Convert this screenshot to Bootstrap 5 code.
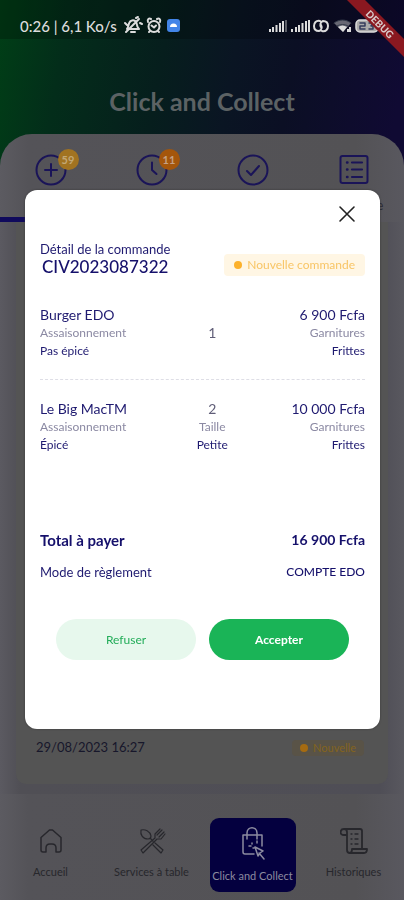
<!DOCTYPE html>
<html lang="fr">
<head>
<meta charset="utf-8">
<meta name="viewport" content="width=device-width, initial-scale=1">
<title>Click and Collect</title>
<link href="https://cdn.jsdelivr.net/npm/bootstrap@5.3.0/dist/css/bootstrap.min.css" rel="stylesheet">
<style>
:root { --navy: #1f1a70; --dim-navy: #1a1458; --ink: #17172b; }
body { font-family: Lato, "Open Sans", sans-serif; background: #545358; color: var(--navy); font-size: 13px; line-height: 18px; }
svg { display: block; flex: none; fill: none; stroke: currentColor; stroke-linecap: round; stroke-linejoin: round; }
.app { background: linear-gradient(100deg, #003f16 0, #032d1a 70px, #061e1d 170px, #0a1523 240px, #0b0f24 300px, #100a33 410px) top / 100% 190px no-repeat; }
.statusbar { height: 39px; padding: 13px 23px 0 20px; background: rgba(0,0,0,.22); color: #dcdcdc; font-size: 15px; line-height: 26px; font-weight: 500; }
.statusbar svg { height: 26px; }
.status-text { width: 103px; white-space: nowrap; }
.ribbon { position: absolute; top: 0; right: 0; z-index: 1060; }
.app-title { font-size: 25px; line-height: 30px; font-weight: 700; color: #5c6264; padding: 47px 0 18px; margin: 0; }
.sheet { background: linear-gradient(90deg, #5c5b61 0, #545358 28px, #535255 88%, #59585f 100%); border-radius: 32px 32px 0 0; }
.tabs { padding-top: 20px; height: 88px; }
.tab-btn { color: var(--dim-navy); background: none; border: 0; padding: 0; line-height: 18px; font-size: 13px; gap: 10px; border-bottom: 5px solid transparent; }
.tab-btn.active { border-color: #100a5c; }
.tab-label { color: #2b2a33; }
.tab-icon { width: 32px; }
.counter { position: absolute; left: 23px; top: -5px; width: 21px; height: 21px; border-radius: 50%; background: #a17321; color: #c3a876; font-size: 11px; line-height: 21px; font-weight: 700; }
.counter-late { background: #a4560b; color: #c5a083; }
.orders { padding: 0 16px 10px; background: linear-gradient(90deg, #5b5a61, #504f55 20px, #4f4e56 94%, #59585f); }
.order-row { background: #545454; border-radius: 0 0 10px 10px; padding: 0 24px 28px 20px; color: var(--ink); font-size: 13px; }
.tag-dim { background: #595347; color: #84641e; border-radius: 4px; font-size: 11px; line-height: 16px; padding: 0 8px; gap: 5px; }
.tag-new { background: #fff6e4; color: #f8c566; border-radius: 4px; font-size: 12px; line-height: 22px; padding: 0 10px; gap: 5px; }
.dot { width: 8px; height: 8px; border-radius: 50%; background: #fcb12c; }
.tag-dim .dot { background: #a66b10; }
.bottom-bar { padding: 23px 0 8px; }
.nav-item-link { color: #27272c; text-decoration: none; font-size: 11px; line-height: 16px; padding: 11px 0 12px; gap: 10px; white-space: nowrap; }
.nav-item-link.active { background: #04003f; color: #8c8ba0; border-radius: 9px; width: 86px; padding: 7px 0 8px; gap: 6px; margin: 0 auto; }
.order-modal .modal-dialog { margin: 190px 24px 24px 25px; max-width: none; }
.order-modal .modal-content { border: 0; border-radius: 12px; padding: 14px 15px 69px; color: var(--navy); box-shadow: 0 0 2px #333; }
.close-x { background: none; border: 0; padding: 0; margin-right: 8px; color: #222; }
.order-no { font-size: 17px; line-height: 18px; font-weight: 500; color: #100a70; margin: 0 2px; }
.line-item { display: grid; grid-template-columns: 38% 30% 32%; font-size: 12px; }
.line-item + .line-item { border-top: 1px dashed #dedee6; padding-top: 20px; margin-top: 19px; }
.item-main { font-size: 14px; }
.item-sub { color: #8b89a3; }
.items { margin-top: 30px; }
.qty { color: #605e78; font-size: 14px; }
.totals { margin-top: 76px; line-height: 20px; }
.total-line { font-size: 15px; font-weight: 700; margin-bottom: 12px; }
.total-sum { font-size: 14px; }
.pay-mode { font-size: 12px; font-weight: 500; }
.total-line, .pay-mode, .order-no { color: #15106b; }
.actions { margin: 37px 16px 0; gap: 13px; }
.actions .btn { border: 0; line-height: 17px; padding: 12px; font-size: 12px; }
.btn-refuse { background: #e7f8ed; color: #24ad5a; }
.btn-accept { background: #1ab457; color: #fff; font-weight: 700; }
</style>
<script src="https://cdn.jsdelivr.net/npm/bootstrap@5.3.0/dist/js/bootstrap.bundle.min.js"></script>
</head>
<body>
<div class="app d-flex flex-column min-vh-100">
  <div class="statusbar d-flex justify-content-between">
    <div class="d-flex">
      <span class="status-text">0:26 | 6,1 Ko/s</span>
      <svg width="58" viewBox="0 0 58 26" stroke-width="2">
        <path d="M4 16c2-2 1-7 4-8 3-2 6 1 6 4 0 2 1 3 2 4zM8 19h4M16 6 3 19M2 10l2 2M17 10l2 1M13 5l2-1"/>
        <circle cx="31" cy="13.500" r="5.500"/><path d="m28.500 12.500 2.500 2 2-2M25 9c-1-3 1-4 3-3M37 9c1-3-1-4-3-3M27 18l-1 1M35 18l1 1"/>
        <rect x="44" y="6" width="13" height="13" rx="3" fill="#4385e8" stroke="none"/><path d="M47 14a3.500 3.500 0 0 1 7 0z" fill="#fff" stroke="none"/>
      </svg>
    </div>
    <svg width="112" viewBox="0 0 112 26">
      <g stroke="none" fill="currentColor"><path d="M0 16h2v3H0zM3 14h2v5H3zM6.500 12h2v7h-2zM10 10h2v9h-2zM13 8h2v11h-2z"/><path opacity=".4" d="M16 7h2v12h-2z"/><path d="M22 16h2v3h-2zM26 14h2v5h-2zM29 12h2v7h-2zM32.500 10h2v9h-2zM36 8h2v11h-2zM39 7h2v12h-2z"/></g>
      <path stroke-width="2" d="M51 8c-4-1-6 2-6 5s2 5 5 5c3-1 3-4 2-6M53 18c4 1 6-2 6-5s-2-5-5-5c-3 1-3 4-2 6"/>
      <g stroke="none" fill="currentColor"><path opacity=".45" d="M65 10c5-4 12-4 17 0l-8 9z"/><path d="M69 14c3-2 6-2 9 0l-4 5z"/><path d="M78 19v-3h2v-2h2v5z"/></g>
      <path d="M65 10c5-4 12-4 17 0M68 13c3-2 8-2 11 0" stroke="#333b4a" stroke-width="1"/>
      <rect x="87" y="7" width="22" height="12" rx="4" fill="#aaa" stroke-width="1.500"/><path d="M111 12v3" stroke-width="1.500"/>
      <path d="M91 10h5v3h-5v3h5M100 10h4l-2 3h2v3h-4" stroke="#333b5c" stroke-width="1.500"/>
    </svg>
  </div>
  <h1 class="app-title text-center">Click and Collect</h1>

  <main class="sheet flex-grow-1 d-flex flex-column">
    <div class="tabs row row-cols-4 g-0">
      <button type="button" class="tab-btn active col d-flex flex-column align-items-center" aria-label="Nouvelles">
        <span class="tab-icon position-relative"><svg width="32" height="32" viewBox="0 0 32 32" stroke-width="2"><circle cx="16" cy="16" r="14.500"/><path d="M16 10v12M10 16h12"/></svg><span class="counter">59</span></span>
      </button>
      <button type="button" class="tab-btn col d-flex flex-column align-items-center" aria-label="En cours">
        <span class="tab-icon position-relative"><svg width="32" height="32" viewBox="0 0 32 32" stroke-width="2"><circle cx="16" cy="16" r="14.500"/><path d="M16 8.500V16l4.500 4"/></svg><span class="counter counter-late">11</span></span>
      </button>
      <button type="button" class="tab-btn col d-flex flex-column align-items-center" aria-label="Prêtes">
        <svg width="32" height="32" viewBox="0 0 32 32" stroke-width="2"><circle cx="16" cy="16" r="14.500"/><path d="m10 17 4 4 8-9"/></svg>
      </button>
      <button type="button" class="tab-btn col d-flex flex-column align-items-center">
        <svg width="32" height="32" viewBox="0 0 32 32" stroke-width="2"><rect x="2.500" y="2" width="27" height="27" rx="2"/><path d="M14 8.500h10M14 15.500h10M14 23h10" stroke-width="2.200"/><path d="M9 8.500h.5M9 15.500h.5M9 23h.5" stroke-width="2.400"/></svg>
        <span class="tab-label">Historique</span>
      </button>
    </div>
    <div class="orders flex-grow-1 d-flex flex-column">
      <div class="order-row flex-grow-1 d-flex align-items-end justify-content-between">
        <time datetime="2023-08-29T16:27">29/08/2023 16:27</time>
        <span class="tag-dim d-flex align-items-center"><i class="dot"></i>Nouvelle</span>
      </div>
    </div>
    <nav class="bottom-bar row row-cols-4 g-0 align-items-center" aria-label="Navigation">
      <div class="col"><a href="#" class="nav-item-link d-flex flex-column align-items-center">
        <svg width="26" height="26" viewBox="0 0 26 26" stroke-width="1.500"><path d="M3 9.500 11.500 2h3L23 9.500V22q0 2-2 2h-3v-4q0-4-4-4h-2q-4 0-4 4v4H5q-2 0-2-2z"/></svg>Accueil</a></div>
      <div class="col"><a href="#" class="nav-item-link d-flex flex-column align-items-center">
        <svg width="28" height="26" viewBox="0 0 28 26" stroke-width="1.200"><path d="M3 2c4-1 9 1 10 6 0 2-1 3-3 3-5 0-8-4-7-9zM12 10l3 3M17 15l8 7-2 3-8-8M24 2l-5 5M26 4l-5 5M22 1l-5 5v4L3 22l2 3 14-14h4l4-5"/></svg>Services à table</a></div>
      <div class="col"><a href="#" class="nav-item-link active d-flex flex-column align-items-center" aria-current="page">
        <svg width="28" height="37" viewBox="0 0 28 37" stroke-width="1.500"><path d="M15 29H6q-2 0-2-2V10h19v11M8 14V8c0-7 10-7 10 0v6M16 22l8 4-3 2-2 3zM20 28l5 6M13 18v1M18 16v2M10 21h2M14 23h1"/></svg>Click and Collect</a></div>
      <div class="col"><a href="#" class="nav-item-link d-flex flex-column align-items-center">
        <svg width="28" height="26" viewBox="0 0 28 26" stroke-width="1.800"><path d="M6 7H4C-1 7 0 1 4 1h16q2 0 2 2v17M4 1q3 0 3 3v18q0 3 3 3h14q3 0 3-4H12q0 4-2 4"/><path d="M11 6h1M15 6h3M11 11h1M15 11h3M11 16h1M15 16h3" stroke-width="1.300"/></svg>Historiques</a></div>
    </nav>
  </main>
</div>

<div class="order-modal modal d-block" role="dialog" aria-modal="true" aria-labelledby="order-no">
  <div class="modal-dialog">
    <div class="modal-content">
      <div class="d-flex justify-content-end">
        <button type="button" class="close-x" aria-label="Fermer"><svg width="20" height="20" viewBox="0 0 20 20" stroke-width="1.600"><path d="m3 3 14 14M17 3 3 17"/></svg></button>
      </div>
      <div class="d-flex justify-content-between align-items-end mt-3">
        <div><div>Détail de la commande</div><h2 class="order-no" id="order-no">CIV2023087322</h2></div>
        <span class="tag-new d-flex align-items-center"><i class="dot"></i>Nouvelle commande</span>
      </div>
      <div class="items">
        <div class="line-item">
          <div><div class="item-main">Burger EDO</div><div class="item-sub">Assaisonnement</div><div>Pas épicé</div></div>
          <div class="qty align-self-center text-center">1</div>
          <div class="text-end"><div class="item-main">6&#8239;900 Fcfa</div><div class="item-sub">Garnitures</div><div>Frittes</div></div>
        </div>
        <div class="line-item">
          <div><div class="item-main">Le Big MacTM</div><div class="item-sub">Assaisonnement</div><div>Épicé</div></div>
          <div class="text-center"><div class="qty">2</div><div class="item-sub">Taille</div><div>Petite</div></div>
          <div class="text-end"><div class="item-main">10&#8239;000 Fcfa</div><div class="item-sub">Garnitures</div><div>Frittes</div></div>
        </div>
      </div>
      <div class="totals">
        <div class="total-line d-flex justify-content-between"><span>Total à payer</span><span class="total-sum">16&#8239;900 Fcfa</span></div>
        <div class="d-flex justify-content-between"><span>Mode de règlement</span><span class="pay-mode">COMPTE EDO</span></div>
      </div>
      <div class="actions d-flex">
        <button type="button" class="btn btn-refuse rounded-pill flex-fill w-50">Refuser</button>
        <button type="button" class="btn btn-accept rounded-pill flex-fill w-50">Accepter</button>
      </div>
    </div>
  </div>
</div>
<svg class="ribbon" width="58" height="58" viewBox="0 0 58 58" role="img" aria-label="Debug"><path d="M1 0h18l39 39v18z" fill="#8a1820" stroke="none"/><text x="34" y="28" transform="rotate(45 34 24)" text-anchor="middle" font-size="10" font-weight="900" fill="#d9c9c9" stroke="none">DEBUG</text></svg>
</body>
</html>
